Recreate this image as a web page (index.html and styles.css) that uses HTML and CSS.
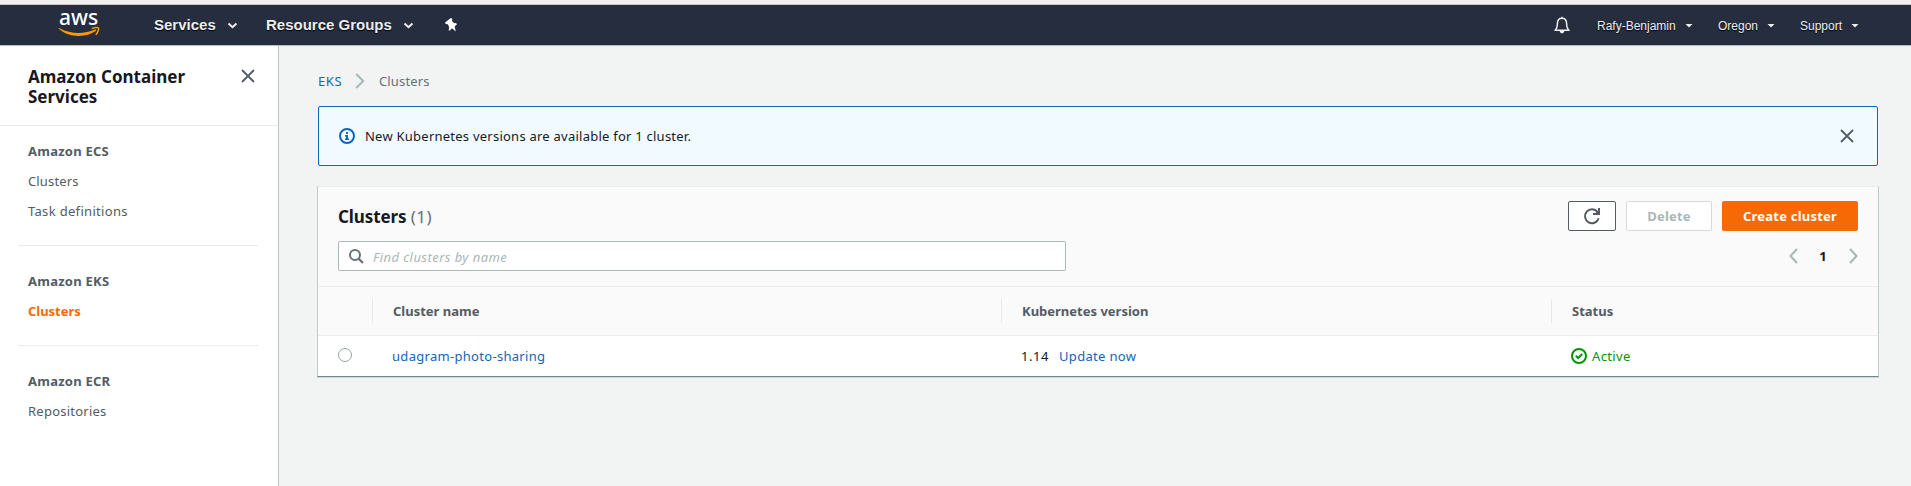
FILE: index.html
```html
<!DOCTYPE html>
<html lang="en">
<head>
<meta charset="utf-8">
<title>Amazon EKS - Clusters</title>
<link rel="stylesheet" href="styles.css">
</head>
<body>
<header class="nav">
  <svg class="logo" width="44" height="36" viewBox="0 -2 44 36">
    <text class="logo-text" x="1" y="16.4">aws</text>
    <path d="M.8 19.8C.2 19.4.8 18.7 1.6 19.2 13 25.4 26 25.2 37 20.6 38.3 20 38.8 21.2 37.8 22 28 28.8 11 29 .8 19.8Z" fill="#f90"/>
    <path d="M33.8 19.7C36.5 18.2 40 18.2 40.5 19.1 40.9 20.4 39.8 23.7 37.7 25.8" fill="none" stroke="#f90" stroke-width="1.5"/>
  </svg>
  <a class="menu services">Services</a>
  <svg class="chev" width="11" height="8" viewBox="0 0 11 8"><path d="M1.5 1.5 5.5 5.2 9.5 1.5"/></svg>
  <a class="menu groups">Resource Groups</a>
  <svg class="chev" width="11" height="8" viewBox="0 0 11 8"><path d="M1.5 1.5 5.5 5.2 9.5 1.5"/></svg>
  <svg class="pin" width="14" height="14" viewBox="0 0 14 14"><path d="M5.4.2 7.3.5 7 2.9 9.3 5.2 11 4.9 12 6.3 9.6 8.4 10.8 13.6 7 10.2 4.6 12.8 3.6 12 4.2 9.2 2.8 6.3.6 5.9.1 4.4Z" fill="#fff"/></svg>
  <div class="nav-right">
    <svg class="bell" width="16" height="18" viewBox="0 0 16 18"><path d="M8 .8V2M1 14.3H15C12.8 12.5 12.7 11 12.6 7.5 12.5 4 10.7 2.3 8 2.3S3.5 4 3.4 7.5C3.3 11 3.2 12.5 1 14.3Z" fill="none" stroke="#eee" stroke-width="1.5" stroke-linejoin="round"/><path d="M5.5 15H10.5Q9.8 17.4 8 17.4T5.5 15Z" fill="#eee"/></svg>
    <a class="acct user">Rafy-Benjamin</a><i class="caret"></i>
    <a class="acct region">Oregon</a><i class="caret"></i>
    <a class="acct support">Support</a><i class="caret"></i>
  </div>
</header>
<div class="page">
  <aside class="side">
    <div class="side-head">
      <h2>Amazon Container<br>Services</h2>
      <svg class="close" width="14" height="14" viewBox="0 0 14 14"><path d="M1 1 13 13M13 1 1 13"/></svg>
    </div>
    <nav class="side-nav">
      <section><b>Amazon ECS</b><a class="l-clusters">Clusters</a><a class="l-task">Task definitions</a></section>
      <section><b>Amazon EKS</b><a class="active">Clusters</a></section>
      <section><b>Amazon ECR</b><a>Repositories</a></section>
    </nav>
  </aside>
  <main>
    <div class="crumbs">
      <a class="eks">EKS</a>
      <svg class="angle" width="10" height="16" viewBox="0 0 10 16"><path d="M1.2 1 8.2 8 1.2 15"/></svg>
      <span class="here">Clusters</span>
    </div>
    <div class="alert">
      <svg width="16" height="16" viewBox="0 0 16 16"><circle cx="8" cy="8" r="7" fill="none" stroke="#1166bb" stroke-width="2"/><path d="M7 4H9V6H7ZM6 7H9V10.5H10V12H6V10.5H7V8.5H6Z" fill="#1166bb"/></svg>
      <span class="alert-text">New Kubernetes versions are available for 1 cluster.</span>
      <svg class="close" width="14" height="14" viewBox="0 0 14 14"><path d="M1 1 13 13M13 1 1 13"/></svg>
    </div>
    <section class="panel">
      <div class="tools">
        <div class="row title-row">
          <h1>Clusters <span>(1)</span></h1>
          <div class="buttons">
            <button class="btn refresh"><svg width="17" height="16" viewBox="0 0 17 16"><path d="M14.7 10.3A7 7 0 1 1 13.6 4" fill="none" stroke="#545b64" stroke-width="2"/><path d="M15 0V6H9" fill="none" stroke="#545b64" stroke-width="2"/><path d="M14.6 2V5.6H11Z" fill="#545b64"/></svg></button>
            <button class="btn delete"><span>Delete</span></button>
            <button class="btn create"><span>Create cluster</span></button>
          </div>
        </div>
        <div class="row search-row">
          <div class="search">
            <svg width="15" height="15" viewBox="0 0 15 15"><circle cx="6" cy="6" r="5" fill="none" stroke="#687078" stroke-width="2"/><path d="M9.6 9.6 14 14" stroke="#687078" stroke-width="2.2"/></svg>
            <span>Find clusters by name</span>
          </div>
          <div class="pager">
            <svg class="angle" width="9" height="16" viewBox="0 0 9 16"><path d="M8 1 1.5 8 8 15"/></svg>
            <b>1</b>
            <svg class="angle" width="9" height="16" viewBox="0 0 9 16"><path d="M1 1 7.5 8 1 15"/></svg>
          </div>
        </div>
      </div>
      <div class="grid head">
        <div></div>
        <div class="th">Cluster name</div>
        <div class="th">Kubernetes version</div>
        <div class="th">Status</div>
      </div>
      <div class="grid body">
        <div><i class="radio"></i></div>
        <div class="td"><a class="c-name">udagram-photo-sharing</a></div>
        <div class="td ver"><span class="c-ver">1.14</span><a class="c-update">Update now</a></div>
        <div class="td status"><svg width="16" height="16" viewBox="0 0 16 16"><circle cx="8" cy="8" r="7" fill="none" stroke="#009600" stroke-width="2"/><path d="M4.8 7.8 7.1 10 11.2 6" fill="none" stroke="#009600" stroke-width="2"/></svg><span>Active</span></div>
      </div>
    </section>
  </main>
</div>
</body>
</html>
```
FILE: styles.css
```css
* { box-sizing: border-box; }
body {
  margin: 0;
  height: 486px;
  overflow: hidden;
  border-top: 4px solid #f2f1f0;
  background: #f2f4f4;
  color: #16191f;
  font: 13px/20px "Noto Sans", "Open Sans", sans-serif;
  display: flex;
  flex-direction: column;
}
svg { display: block; flex: none; overflow: visible; }
.nav {
  height: 42px;
  flex: none;
  display: flex;
  align-items: center;
  background: #252d3f;
  border-top: 1px solid #c6c6c6;
  border-bottom: 1px solid #b9bec3;
  padding-left: 58px;
  font-family: "Liberation Sans", Arial, sans-serif;
  color: #eee;
}
.logo-text { font: 500 21px "Noto Sans", sans-serif; fill: #fff; }
.menu { font-size: 15px; font-weight: bold; text-shadow: 0 1px 1px #000; white-space: nowrap; }
.services { margin-left: 52px; width: 73px; }
.groups { margin-left: 28px; width: 137px; }
.chev { margin-top: 2px; }
.chev path { fill: none; stroke: #eee; stroke-width: 2; }
.pin { margin-left: 31px; }
.nav-right { margin-left: auto; display: flex; align-items: center; padding-right: 53px; }
.acct { font-size: 12px; text-shadow: 0 1px 1px #000; white-space: nowrap; padding-top: 1px; }
.user { margin-left: 27px; width: 88px; }
.region { margin-left: 26px; width: 49px; }
.support { margin-left: 26px; width: 51px; }
.caret { width: 8px; height: 4px; margin-top: 1px; margin-right: -1px; background: #eee; clip-path: polygon(0 0, 100% 0, 50% 100%); }
.page { flex: 1; display: flex; }
.side { width: 279px; background: #fff; border-right: 1px solid #bcc2c3; }
.side-head {
  height: 80px;
  padding: 21px 23px 0 28px;
  display: flex;
  justify-content: space-between;
  border-bottom: 1px solid #eaeded;
}
h2 { margin: 0; font-size: 17px; line-height: 20px; letter-spacing: 0; white-space: nowrap; }
.side-head .close { margin-top: 2px; }
.close path { stroke: #545b64; stroke-width: 1.8; fill: none; }
.side-nav { color: #545b64; padding: 0 20px 0 18px; letter-spacing: .24px; }
.side-nav section { padding: 15px 10px 24px; border-bottom: 1px solid #eaeded; display: flex; flex-direction: column; gap: 10px; }
.side-nav section + section { padding-top: 25px; }
.side-nav section:last-child { border: 0; }
.side-nav .l-clusters { letter-spacing: .15px; }
.side-nav .l-task { letter-spacing: .32px; }
.side-nav .active { color: #f66a05; font-weight: bold; letter-spacing: -.02px; }
main { flex: 1; padding: 25px 32px 0 38px; }
.crumbs { display: flex; align-items: center; height: 20px; margin-left: 1px; color: #687078; }
.crumbs .angle { margin: 0 14px 0 13px; }
.crumbs .eks { width: 24px; letter-spacing: .6px; }
.crumbs .here { letter-spacing: .15px; }
.eks, .c-name, .c-update { color: #1166bb; }
.angle path { fill: none; stroke: #aab7b8; stroke-width: 2; }
.alert {
  height: 60px;
  margin: 15px 1px 20px;
  padding: 0 23px 0 20px;
  display: flex;
  align-items: center;
  gap: 10px;
  border: 1px solid #1166bb;
  border-radius: 2px;
  background: #f1faff;
}
.alert-text { letter-spacing: .24px; }
.alert .close { margin-left: auto; }
.panel {
  background: #fff;
  border: 1px solid #c2cacb;
  border-top-color: #eaeded;
  border-bottom-color: #74898a;
  box-shadow: 0 1px 0 #d0d6d6;
  height: 191px;
}
.tools { height: 100px; padding: 14px 20px 0; background: #fafafa; border-bottom: 1px solid #eaeded; }
.row { display: flex; justify-content: space-between; align-items: center; }
.title-row { height: 30px; }
h1 { margin: 0; padding-top: 2px; font-size: 17px; line-height: 22px; letter-spacing: -.1px; }
h1 span { font-weight: normal; color: #687078; letter-spacing: .5px; }
.buttons { display: flex; gap: 10px; }
.btn { height: 30px; padding: 0; border: 1px solid #545b64; border-radius: 2px; background: #fff; font: bold 13px/20px "Noto Sans", sans-serif; letter-spacing: .22px; display: flex; align-items: center; justify-content: center; white-space: nowrap; }
.refresh { width: 48px; }
.delete { width: 86px; border-color: #d5dbdb; color: #aab7b8; }
.create { width: 136px; border-color: #f66a05; background: #f66a05; color: #fff; }
.search-row { height: 30px; margin-top: 10px; }
.search { width: 728px; height: 30px; padding-left: 10px; display: flex; align-items: center; gap: 9px; border: 1px solid #aab7b8; border-radius: 2px; background: #fff; color: #aab7b8; font-style: italic; letter-spacing: .45px; }
.search span { padding-top: 2px; }
.pager { display: flex; align-items: center; padding-right: .5px; margin-top: -1px; }
.pager b { width: 51px; padding-top: 1px; text-align: center; }
.grid { display: grid; grid-template-columns: 54px 629px 550px 1fr; align-items: center; }
.head { height: 49px; background: #fafafa; border-bottom: 1px solid #eaeded; color: #545b64; font-weight: bold; }
.th { height: 24px; line-height: 24px; padding-left: 20px; border-left: 1px solid #e6e9e9; }
.body { height: 40px; }
.td { padding-left: 20px; }
.radio { display: block; width: 14px; height: 14px; margin: -2px 0 0 20px; border: 1px solid #95a5a6; border-radius: 50%; }
.c-name { display: block; letter-spacing: .3px; }
.ver { display: flex; gap: 10px; }
.c-ver { letter-spacing: .55px; }
.c-update { letter-spacing: .32px; }
.status { display: flex; align-items: center; gap: 5px; color: #009600; }
.status span { letter-spacing: .35px; }
```
